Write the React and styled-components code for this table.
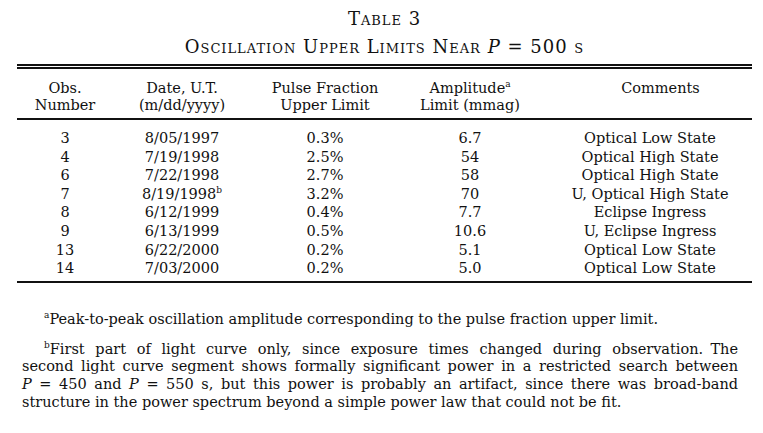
import React from 'react';
import styled, { createGlobalStyle } from 'styled-components';

const GlobalStyle = createGlobalStyle`
  html, body {
    margin: 0;
    padding: 0;
    background: #fff;
  }
  body {
    font-family: "DejaVu Serif", "Liberation Serif", serif;
    color: #111;
  }
`;

const Page = styled.div`
  width: 763px;
  height: 433px;
  box-sizing: border-box;
  padding: 9px 11px 0 17px;
  display: flex;
  flex-direction: column;
`;

const Caption = styled.div`
  text-align: center;
  font-variant: small-caps;
  font-size: 18px;
  line-height: 20px;
  letter-spacing: 1px;
`;

const Subtitle = styled(Caption)`
  margin-top: 8px;
`;

const Italic = styled.i`
  font-variant: normal;
`;

const Table = styled.table`
  width: 735px;
  margin-top: 7px;
  border-collapse: collapse;
  border-top: 5px double #111;
  border-bottom: 2px solid #111;
  font-size: 14.5px;
`;

const HeadCell = styled.th`
  font-weight: normal;
  text-align: center;
  vertical-align: top;
  line-height: 17px;
  padding: ${p => (p.$first ? '11px' : '0')} 0 ${p => (p.$last ? '4px' : '0')};
  width: ${p => p.$w || 'auto'};
  padding-left: ${p => p.$pl || '0'};
`;

const HeadRow = styled.tr`
  border-bottom: ${p => (p.$rule ? '2px solid #111' : 'none')};
`;

const Cell = styled.td`
  text-align: center;
  line-height: 18.6px;
  padding: ${p => (p.$top ? '9px' : '0')} 0 ${p => (p.$bottom ? '3px' : '0')};
  padding-left: ${p => p.$pl || '0'};
`;

const Sup = styled.sup`
  font-size: 9px;
  line-height: 0;
  vertical-align: 6px;
`;

const Notes = styled.div`
  margin: 28px 14px 0 5px;
  font-size: 14.5px;
  line-height: 17.8px;
`;

const Note = styled.div`
  margin-bottom: 12px;
`;

const Line = styled.div`
  white-space: nowrap;
  text-align: ${p => (p.$last ? 'left' : 'justify')};
  text-align-last: ${p => (p.$last ? 'left' : 'justify')};
  padding-left: ${p => (p.$indent ? '22px' : '0')};
`;

const columns = [
  { top: 'Obs.', bottom: 'Number', w: '96px' },
  { top: 'Date, U.T.', bottom: '(m/dd/yyyy)', w: '138px' },
  { top: 'Pulse Fraction', bottom: 'Upper Limit', w: '148px' },
  { top: 'Amplitude', sup: 'a', bottom: 'Limit (mmag)', w: '142px' },
  { top: 'Comments', bottom: '', pl: '28px' },
];

const rows = [
  ['3', '8/05/1997', '0.3%', '6.7', 'Optical Low State'],
  ['4', '7/19/1998', '2.5%', '54', 'Optical High State'],
  ['6', '7/22/1998', '2.7%', '58', 'Optical High State'],
  ['7', '8/19/1998', '3.2%', '70', 'U, Optical High State', 'b'],
  ['8', '6/12/1999', '0.4%', '7.7', 'Eclipse Ingress'],
  ['9', '6/13/1999', '0.5%', '10.6', 'U, Eclipse Ingress'],
  ['13', '6/22/2000', '0.2%', '5.1', 'Optical Low State'],
  ['14', '7/03/2000', '0.2%', '5.0', 'Optical Low State'],
];

export default function App() {
  return (
    <>
      <GlobalStyle />
      <Page>
        <Caption>Table 3</Caption>
        <Subtitle>
          Oscillation Upper Limits Near <Italic>P</Italic> = 500 s
        </Subtitle>
        <Table>
          <thead>
            <HeadRow>
              {columns.map(c => (
                <HeadCell key={c.top} $first $w={c.w} $pl={c.pl}>
                  {c.top}
                  {c.sup && <Sup>{c.sup}</Sup>}
                </HeadCell>
              ))}
            </HeadRow>
            <HeadRow $rule>
              {columns.map(c => (
                <HeadCell key={c.top} $last $pl={c.pl}>
                  {c.bottom}
                </HeadCell>
              ))}
            </HeadRow>
          </thead>
          <tbody>
            {rows.map((r, i) => (
              <tr key={r[0]}>
                {r.slice(0, 5).map((v, j) => (
                  <Cell
                    key={j}
                    $top={i === 0}
                    $bottom={i === rows.length - 1}
                    $pl={j === 4 ? '7px' : '0'}
                  >
                    {v}
                    {j === 1 && r[5] && <Sup>{r[5]}</Sup>}
                  </Cell>
                ))}
              </tr>
            ))}
          </tbody>
        </Table>
        <Notes>
          <Note>
            <Line $indent $last>
              <Sup>a</Sup>Peak-to-peak oscillation amplitude corresponding to the pulse fraction upper limit.
            </Line>
          </Note>
          <Note>
            <Line $indent>
              <Sup>b</Sup>First part of light curve only, since exposure times changed during observation.{'\u2002'}The
            </Line>
            <Line>second light curve segment shows formally significant power in a restricted search between</Line>
            <Line>
              <i>P</i> = 450 and <i>P</i> = 550 s, but this power is probably an artifact, since there was broad-band
            </Line>
            <Line $last>structure in the power spectrum beyond a simple power law that could not be fit.</Line>
          </Note>
        </Notes>
      </Page>
    </>
  );
}
